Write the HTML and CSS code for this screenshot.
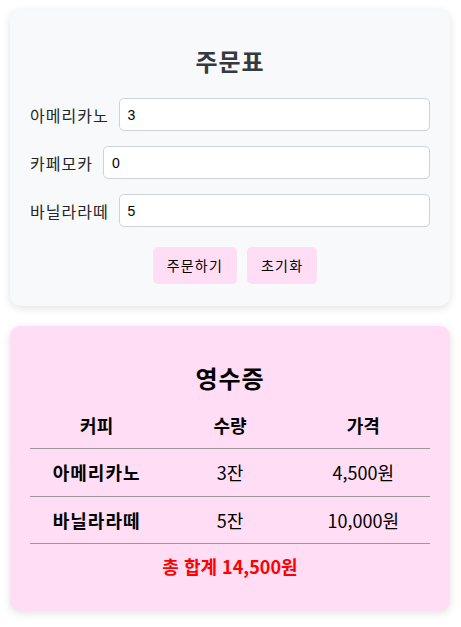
FILE: index.html
```html
<!DOCTYPE html>
<html lang="ko">
<head>
<meta charset="utf-8">
<title>주문표</title>
<link rel="stylesheet" href="styles.css">
</head>
<body>
<section class="card order">
  <h2 class="title">주문표</h2>
  <div class="row">
    <label class="label">아메리카노</label>
    <input class="field" type="text" value="3">
  </div>
  <div class="row">
    <label class="label">카페모카</label>
    <input class="field" type="text" value="0">
  </div>
  <div class="row">
    <label class="label">바닐라라떼</label>
    <input class="field" type="text" value="5">
  </div>
  <div class="actions">
    <button class="btn">주문하기</button>
    <button class="btn">초기화</button>
  </div>
</section>
<section class="card receipt">
  <h2 class="title dark">영수증</h2>
  <table class="table">
    <thead>
      <tr><th>커피</th><th>수량</th><th>가격</th></tr>
    </thead>
    <tbody>
      <tr><td class="name">아메리카노</td><td>3잔</td><td>4,500원</td></tr>
      <tr><td class="name">바닐라라떼</td><td>5잔</td><td>10,000원</td></tr>
    </tbody>
  </table>
  <p class="total">총 합계 14,500원</p>
</section>
</body>
</html>
```
FILE: styles.css
```css
html, body {
  margin: 0;
  padding: 0;
  background: #ffffff;
}
body {
  padding: 10px;
  font-family: "Noto Sans CJK KR", "Noto Sans", sans-serif;
  color: #000;
}
.card {
  width: 440px;
  box-sizing: border-box;
  border-radius: 10px;
  padding: 13px 20px 22px;
  box-shadow: 0 2px 8px rgba(0, 0, 0, 0.12);
}
.order {
  background: #f8f9fa;
}
.receipt {
  margin-top: 20px;
  background: #ffddf4;
  padding-top: 14px;
  padding-bottom: 32px;
}
.title {
  margin: 20px 0 20px;
  text-align: center;
  font-size: 24px;
  font-weight: 700;
  color: #343a40;
  line-height: 35px;
  letter-spacing: 1px;
}
.title.dark {
  color: #000;
  margin-bottom: 7px;
}
.row {
  display: flex;
  align-items: center;
  margin-bottom: 15px;
}
.label {
  font-size: 16px;
  letter-spacing: 1px;
  margin-right: 10px;
  color: #212529;
}
.field {
  flex: 1;
  min-width: 0;
  height: 33px;
  box-sizing: border-box;
  padding: 0 8px;
  border: 1px solid #ced4da;
  border-radius: 5px;
  background: #fff;
  font-family: "Liberation Sans", Arial, sans-serif;
  font-size: 14px;
  color: #000;
}
.actions {
  display: flex;
  justify-content: center;
  margin-top: 20px;
}
.btn {
  margin-left: 10px;
  border: none;
  border-radius: 5px;
  background: #ffddf4;
  padding: 8px 14px;
  font-family: "Noto Sans CJK KR", sans-serif;
  font-size: 14px;
  letter-spacing: 1.2px;
  line-height: 21px;
  color: #000;
}
.table {
  width: 100%;
  border-collapse: collapse;
  table-layout: fixed;
  font-size: 18px;
}
.table th, .table td {
  text-align: center;
  padding: 0;
  line-height: 26px;
  border-bottom: 1px solid #999;
}
.table th {
  height: 46px;
  font-weight: 700;
}
.table td {
  height: 46.5px;
}
.table td.name {
  font-weight: 700;
  letter-spacing: 1px;
}
.total {
  margin: 9px 0 0;
  text-align: center;
  color: #ff0000;
  font-weight: 700;
  font-size: 18px;
}
```
